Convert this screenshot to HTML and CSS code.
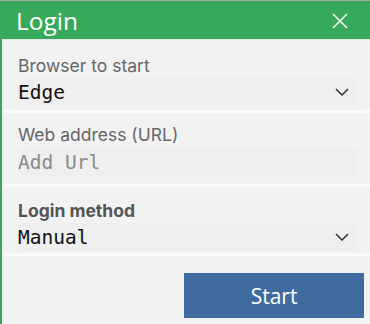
FILE: index.html
```html
<!DOCTYPE html>
<html lang="en">
<head>
    <meta charset="UTF-8">
    <title>Login</title>
    <link rel="stylesheet" href="styles.css">
</head>
<body>

<div class="dialog">
    <div class="dialog-header">
        <span class="dialog-title">Login</span>
        <button class="close-button" aria-label="Close">
            <svg width="16" height="16" viewBox="0 0 16 16">
                <path d="M1 1 L15 15 M15 1 L1 15" stroke="#ffffff" stroke-width="1.5" fill="none"/>
            </svg>
        </button>
    </div>

    <div class="dialog-body">
        <div class="field">
            <div class="field-label">Browser to start</div>
            <div class="select-box">
                <span class="value">Edge</span>
                <svg class="chevron" width="14" height="8" viewBox="0 0 14 8">
                    <polyline points="1,1 7,7 13,1" stroke="#333333" stroke-width="1.5" fill="none"/>
                </svg>
            </div>
        </div>

        <div class="field field-url">
            <div class="field-label">Web address (URL)</div>
            <div class="select-box input-box">
                <span class="value placeholder">Add Url</span>
            </div>
        </div>

        <div class="field field-last">
            <div class="field-label bold">Login method</div>
            <div class="select-box">
                <span class="value">Manual</span>
                <svg class="chevron" width="14" height="8" viewBox="0 0 14 8">
                    <polyline points="1,1 7,7 13,1" stroke="#333333" stroke-width="1.5" fill="none"/>
                </svg>
            </div>
        </div>

        <div class="dialog-footer">
            <button class="start-button">Start</button>
        </div>
    </div>
</div>

</body>
</html>
```

FILE: styles.css
```css
body {
    margin: 0;
    padding: 0;
    font-family: Inter, "Noto Sans", sans-serif;
    background-color: #f2f2f2;
}

.dialog {
    width: 370px;
    height: 324px;
    display: flex;
    flex-direction: column;
    background-color: #37a95a;
    border-top: 1px solid #a7a9ab;
    box-sizing: border-box;
}

.dialog-header {
    height: 38px;
    display: flex;
    align-items: center;
    justify-content: space-between;
    padding: 0 22px 0 16px;
}

.dialog-title {
    font-family: "Open Sans", "Noto Sans", sans-serif;
    font-size: 24.5px;
    color: white;
    margin-top: 1px;
}

.close-button {
    background: none;
    border: none;
    padding: 0;
    width: 16px;
    height: 16px;
    margin-top: 2px;
    cursor: pointer;
}

.dialog-body {
    flex: 1;
    margin-left: 2px;
    display: flex;
    flex-direction: column;
    gap: 3px;
    background-color: #fbfbfb;
    border-top: 1px solid #e6e6e6;
    border-left: 1px solid #f8f8f8;
}

.field {
    background-color: #f2f2f2;
    padding: 16px 12px 4px 15px;
}

.field-url {
    padding-top: 12px;
    padding-bottom: 7px;
}

.field-url .select-box {
    height: 30px;
}

.field-last {
    padding-top: 14px;
    padding-bottom: 2px;
}

.field-label {
    font-size: 17.5px;
    line-height: 20px;
    color: #666666;
}

.field-label.bold {
    font-weight: bold;
    color: #555555;
}

.select-box {
    display: flex;
    align-items: center;
    justify-content: space-between;
    height: 28px;
    margin-top: 2px;
    padding: 0 9px 0 0;
    border-radius: 6px;
    background-color: #efefef;
}

.value {
    font-family: "DejaVu Sans Mono", monospace;
    font-size: 19.5px;
    color: #111111;
}

.placeholder {
    color: #8a8a8a;
}

.dialog-footer {
    flex: 1;
    background-color: #f2f2f2;
    display: flex;
    justify-content: flex-end;
    align-items: flex-start;
    padding: 17px 6px 0 0;
}

.start-button {
    width: 180px;
    height: 45px;
    border: none;
    background-color: #3f6b9e;
    color: white;
    font-family: "Open Sans", "Noto Sans", sans-serif;
    font-size: 21px;
    padding-top: 2px;
    cursor: pointer;
}
```
